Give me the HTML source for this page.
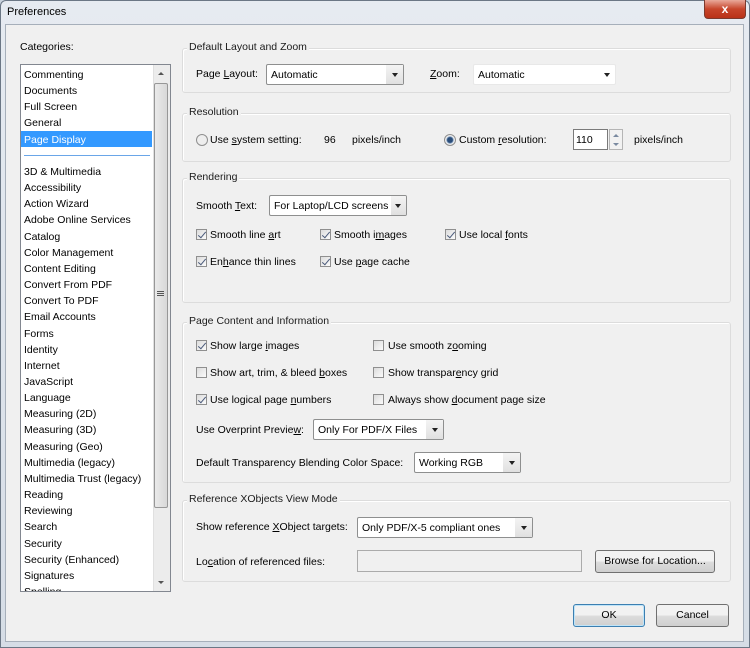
<!DOCTYPE html>
<html><head><style>
*{box-sizing:border-box}
body{margin:0;width:750px;height:648px;overflow:hidden;background:#c9d3de;font-family:"Liberation Sans",sans-serif;font-size:10.5px;color:#000;position:relative}
.a{position:absolute;white-space:nowrap}
.frame{position:absolute;left:0;top:0;width:750px;height:648px;background:linear-gradient(#e6ebf1,#d6dde6);border:1px solid #6b7785;border-radius:6px 6px 0 0}
.client{position:absolute;left:5px;top:24px;width:739px;height:618px;background:#f0f0f0;border:1px solid #a6afba}
.grp{position:absolute;border:1px solid #dcdcdc;border-radius:3px;box-shadow:inset 1px 1px 0 #fff}
.gl{position:absolute;background:#f0f0f0;padding:0 2px;top:-8px;left:4px;color:#1b1b1b}
.dd{position:absolute;height:21px;border:1px solid #8e8f8f;border-radius:2px;background:#fff;padding:4px 4px;line-height:12px}
.dd i{position:absolute;right:0;top:0;width:17px;height:19px;background:linear-gradient(#f4f4f4,#e0e0e0)}
.dd i:after,.dd b:after{content:"";position:absolute;right:5px;top:8px;border-left:3.5px solid transparent;border-right:3.5px solid transparent;border-top:4px solid #222}
.dd b{position:absolute;right:0;top:0;width:17px;height:19px}
.cb{position:absolute;width:11px;height:11px;border:1px solid #8f8f8f;background:linear-gradient(135deg,#dcdcdc,#fbfbfb)}
.cb.c:after{content:"";position:absolute;left:3px;top:0px;width:3px;height:7px;border:solid #4a5a7a;border-width:0 1.5px 1.5px 0;transform:rotate(40deg)}
.btn{position:absolute;height:23px;border:1px solid #707070;border-radius:3px;background:linear-gradient(#f2f2f2 50%,#dddddd 50%,#cfcfcf);text-align:center;line-height:21px}
</style></head><body>
<div class="frame"></div>
<div class="a" style="left:7px;top:6px;font-size:11px">Preferences</div>
<div class="a" style="left:704px;top:0;width:42px;height:19px;border:1px solid #7b3a2e;border-top:0;border-radius:0 0 4px 4px;background:linear-gradient(#e9a99a,#c7452b 50%,#b93218);color:#fff;text-align:center;font-weight:bold;font-size:12px;line-height:18px">x</div>
<div class="client"></div>

<div class="a" style="left:20px;top:41px">Categories:</div>
<div class="a" style="left:20px;top:64px;width:151px;height:528px;background:#fff;border:1px solid #828790;overflow:hidden"></div>
<div class="a" style="left:21px;top:131px;width:131px;height:16px;background:#3399ff"></div>
<div class="a" style="left:24px;top:155px;width:126px;height:1px;background:#6aa6e8"></div>
<div class="a" style="left:153px;top:65px;width:17px;height:526px;background:#ececec;border-left:1px solid #e0e0e0"></div>
<div class="a" style="left:154px;top:83px;width:14px;height:425px;border:1px solid #979797;border-radius:2px;background:linear-gradient(90deg,#eaeaea,#d8d8d8)"></div>
<div class="a" style="left:157px;top:291px;width:7px;height:1px;background:#555;box-shadow:0 2px #555,0 4px #555"></div>
<div class="a" style="left:158px;top:72px;border-left:3px solid transparent;border-right:3px solid transparent;border-bottom:3px solid #555"></div>
<div class="a" style="left:158px;top:581px;border-left:3px solid transparent;border-right:3px solid transparent;border-top:3px solid #555"></div>
<div class="a" style="left:21px;top:65px;width:131px;height:526px;overflow:hidden">
<div style="position:relative;line-height:16.15px">
<div style="padding:2px 0 0 3px">Commenting<br>Documents<br>Full Screen<br>General<br><span style="color:#fff">Page Display</span><br><br>3D &amp; Multimedia<br>Accessibility<br>Action Wizard<br>Adobe Online Services<br>Catalog<br>Color Management<br>Content Editing<br>Convert From PDF<br>Convert To PDF<br>Email Accounts<br>Forms<br>Identity<br>Internet<br>JavaScript<br>Language<br>Measuring (2D)<br>Measuring (3D)<br>Measuring (Geo)<br>Multimedia (legacy)<br>Multimedia Trust (legacy)<br>Reading<br>Reviewing<br>Search<br>Security<br>Security (Enhanced)<br>Signatures<br>Spelling</div></div></div>

<div class="grp" style="left:182px;top:48px;width:549px;height:45px"><span class="gl">Default Layout and Zoom</span></div>
<div class="a" style="left:196px;top:68px">Page <u>L</u>ayout:</div>
<div class="dd" style="left:266px;top:64px;width:138px">Automatic<i></i></div>
<div class="a" style="left:430px;top:68px"><u>Z</u>oom:</div>
<div class="dd" style="left:473px;top:64px;width:143px;border-color:#e8e8e8">Automatic<b></b></div>

<div class="grp" style="left:182px;top:113px;width:549px;height:49px"><span class="gl">Resolution</span></div>
<div class="a" style="left:196px;top:134px;width:12px;height:12px;border:1px solid #8f8f8f;border-radius:50%;background:#eee"></div>
<div class="a" style="left:210px;top:134px">Use <u>s</u>ystem setting:</div>
<div class="a" style="left:324px;top:134px">96</div>
<div class="a" style="left:352px;top:134px">pixels/inch</div>
<div class="a" style="left:444px;top:134px;width:12px;height:12px;border:1px solid #8f8f8f;border-radius:50%;background:radial-gradient(#2a4d7a 2.5px,#9fb7d2 3.5px,#eee 4px)"></div>
<div class="a" style="left:459px;top:134px">Custom <u>r</u>esolution:</div>
<div class="a" style="left:573px;top:129px;width:35px;height:21px;background:#fff;border:1px solid #7a7a7a;padding:4px 2px;line-height:12px">110</div>
<div class="a" style="left:609px;top:129px;width:14px;height:21px;border:1px solid #b5b5b5;background:#f2f2f2"></div>
<div class="a" style="left:613px;top:134px;border-left:3px solid transparent;border-right:3px solid transparent;border-bottom:3px solid #7a8aa0"></div>
<div class="a" style="left:613px;top:143px;border-left:3px solid transparent;border-right:3px solid transparent;border-top:3px solid #7a8aa0"></div>
<div class="a" style="left:634px;top:134px">pixels/inch</div>

<div class="grp" style="left:182px;top:178px;width:549px;height:125px"><span class="gl">Rendering</span></div>
<div class="a" style="left:196px;top:200px">Smooth <u>T</u>ext:</div>
<div class="dd" style="left:269px;top:195px;width:138px;overflow:hidden">For Laptop/LCD screens<i style="width:15px"></i></div>
<div class="cb c" style="left:196px;top:229px"></div><div class="a" style="left:210px;top:229px">Smooth line <u>a</u>rt</div>
<div class="cb c" style="left:320px;top:229px"></div><div class="a" style="left:334px;top:229px">Smooth i<u>m</u>ages</div>
<div class="cb c" style="left:445px;top:229px"></div><div class="a" style="left:459px;top:229px">Use local <u>f</u>onts</div>
<div class="cb c" style="left:196px;top:256px"></div><div class="a" style="left:210px;top:256px">En<u>h</u>ance thin lines</div>
<div class="cb c" style="left:320px;top:256px"></div><div class="a" style="left:334px;top:256px">Use <u>p</u>age cache</div>

<div class="grp" style="left:182px;top:322px;width:549px;height:161px"><span class="gl">Page Content and Information</span></div>
<div class="cb c" style="left:196px;top:340px"></div><div class="a" style="left:210px;top:340px">Show large <u>i</u>mages</div>
<div class="cb" style="left:373px;top:340px"></div><div class="a" style="left:388px;top:340px">Use smooth z<u>o</u>oming</div>
<div class="cb" style="left:196px;top:367px"></div><div class="a" style="left:210px;top:367px">Show art, trim, &amp; bleed <u>b</u>oxes</div>
<div class="cb" style="left:373px;top:367px"></div><div class="a" style="left:388px;top:367px">Show transpar<u>e</u>ncy grid</div>
<div class="cb c" style="left:196px;top:394px"></div><div class="a" style="left:210px;top:394px">Use logical page <u>n</u>umbers</div>
<div class="cb" style="left:373px;top:394px"></div><div class="a" style="left:388px;top:394px">Always show <u>d</u>ocument page size</div>
<div class="a" style="left:196px;top:424px">Use Overprint Previe<u>w</u>:</div>
<div class="dd" style="left:313px;top:419px;width:131px">Only For PDF/X Files<i></i></div>
<div class="a" style="left:196px;top:457px">Default Transparency Blending Color Space:</div>
<div class="dd" style="left:414px;top:452px;width:107px">Working RGB<i></i></div>

<div class="grp" style="left:182px;top:500px;width:549px;height:82px"><span class="gl">Reference XObjects View Mode</span></div>
<div class="a" style="left:196px;top:521px">Show reference <u>X</u>Object targets:</div>
<div class="dd" style="left:357px;top:517px;width:176px">Only PDF/X-5 compliant ones<i></i></div>
<div class="a" style="left:196px;top:556px">Lo<u>c</u>ation of referenced files:</div>
<div class="a" style="left:357px;top:550px;width:225px;height:22px;border:1px solid #ababab;background:#f0f0f0"></div>
<div class="btn" style="left:595px;top:550px;width:120px">Browse for Location...</div>

<div class="btn" style="left:573px;top:604px;width:72px;border-color:#3c7fb1;box-shadow:inset 0 0 0 1px #bfe4f8">OK</div>
<div class="btn" style="left:656px;top:604px;width:73px">Cancel</div>
</body></html>
